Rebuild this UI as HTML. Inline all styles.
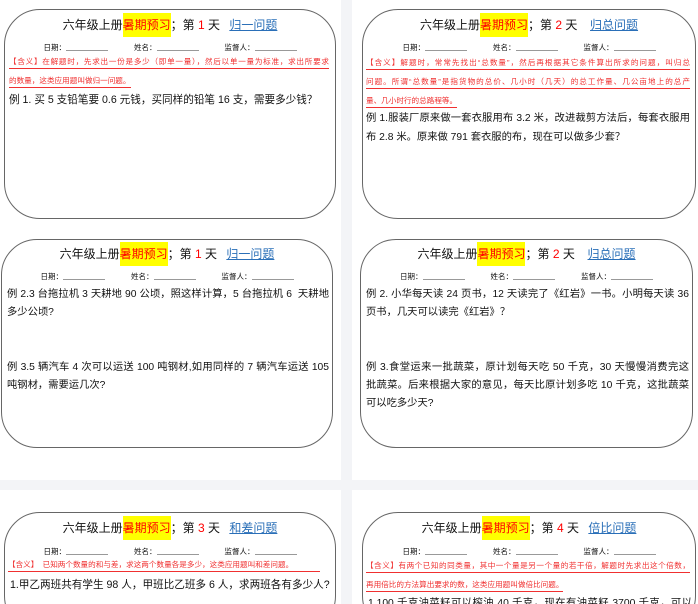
<!DOCTYPE html>
<html style="width:698px;height:604px;overflow:hidden"><head><meta charset="utf-8"><style>
*{margin:0;padding:0;box-sizing:border-box}
body{width:698px;height:604px;background:#f3f4f7;position:relative;overflow:hidden;font-family:"Liberation Sans","Noto Sans CJK SC",sans-serif;color:#111}
.pg{position:absolute;background:#fff}
.card{position:absolute;border:1px solid #666;border-radius:36px;background:#fff}
.t{position:absolute;left:0;right:0;text-align:center;font-size:12px;white-space:nowrap}
.hl{background:#ff0;color:#f00;display:inline-block;padding:5px 0;line-height:14px}
.r{color:#f00}
.lk{color:#2a6fb8;text-decoration:underline;margin-left:6px}
.d{position:absolute;left:0;right:0;text-align:center;font-size:7.5px;white-space:nowrap}
.d span{display:inline-block;margin:0 13px}
.u{display:inline-block;width:42px;border-bottom:1px solid #999;vertical-align:-1px}
.m{position:absolute;font-size:7.6px;color:#f03030;white-space:nowrap;border-bottom:1px solid #f03030;line-height:12px}
.j{text-align:justify;text-align-last:justify}
.e{position:absolute;font-size:10.3px;white-space:nowrap;line-height:14px}
</style></head><body>
<div class="pg" style="left:0;top:0;width:341px;height:480px"></div>
<div class="pg" style="left:352px;top:0;width:346px;height:480px"></div>
<div class="pg" style="left:0;top:490px;width:341px;height:114px"></div>
<div class="pg" style="left:352px;top:490px;width:346px;height:114px"></div>

<div class="card" style="left:4px;top:9px;width:332px;height:210px">
 <div class="t" style="top:3px">六年级上册<span class="hl">暑期预习</span>；第 <span class="r">1</span> 天 <span class="lk">归一问题</span></div>
 <div class="d" style="top:32px"><span>日期：<i class="u"></i></span><span>姓名：<i class="u"></i></span><span>监督人：<i class="u"></i></span></div>
 <div class="m j" style="left:4px;width:320px;top:46px">【含义】在解题时，先求出一份是多少（即单一量），然后以单一量为标准，求出所要求</div>
 <div class="m" style="left:4px;top:65px">的数量，这类应用题叫做归一问题。</div>
 <div class="e" style="left:4px;top:83px;font-size:10.6px">例 1. 买 5 支铅笔要 0.6 元钱，买同样的铅笔 16 支，需要多少钱？</div>
</div>

<div class="card" style="left:362px;top:9px;width:334px;height:210px">
 <div class="t" style="top:3px">六年级上册<span class="hl">暑期预习</span>；第 <span class="r">2</span> 天 &nbsp;<span class="lk">归总问题</span></div>
 <div class="d" style="top:32px"><span>日期：<i class="u"></i></span><span>姓名：<i class="u"></i></span><span>监督人：<i class="u"></i></span></div>
 <div class="m j" style="left:3px;width:324px;top:47px">【含义】解题时，常常先找出“总数量”，然后再根据其它条件算出所求的问题，叫归总</div>
 <div class="m j" style="left:3px;width:324px;top:66px">问题。所谓“总数量”是指货物的总价、几小时（几天）的总工作量、几公亩地上的总产</div>
 <div class="m" style="left:3px;top:85px">量、几小时行的总路程等。</div>
 <div class="e j" style="left:3px;width:324px;top:102px">例 1.服装厂原来做一套衣服用布 3.2 米，改进裁剪方法后，每套衣服用</div>
 <div class="e" style="left:3px;top:121px">布 2.8 米。原来做 791 套衣服的布，现在可以做多少套？</div>
</div>

<div class="card" style="left:1px;top:239px;width:332px;height:209px">
 <div class="t" style="top:2px">六年级上册<span class="hl">暑期预习</span>；第 <span class="r">1</span> 天 <span class="lk">归一问题</span></div>
 <div class="d" style="top:31px"><span>日期：<i class="u"></i></span><span>姓名：<i class="u"></i></span><span>监督人：<i class="u"></i></span></div>
 <div class="e j" style="left:5px;width:322px;top:48px">例 2.3 台拖拉机 3 天耕地 90 公顷，照这样计算，5 台拖拉机 6 &nbsp;天耕地</div>
 <div class="e" style="left:5px;top:66px">多少公顷?</div>
 <div class="e j" style="left:5px;width:322px;top:121px">例 3.5 辆汽车 4 次可以运送 100 吨钢材,如用同样的 7 辆汽车运送 105</div>
 <div class="e" style="left:5px;top:139px">吨钢材，需要运几次?</div>
</div>

<div class="card" style="left:360px;top:239px;width:333px;height:209px">
 <div class="t" style="top:2px">六年级上册<span class="hl">暑期预习</span>；第 <span class="r">2</span> 天 &nbsp;<span class="lk">归总问题</span></div>
 <div class="d" style="top:31px"><span>日期：<i class="u"></i></span><span>姓名：<i class="u"></i></span><span>监督人：<i class="u"></i></span></div>
 <div class="e j" style="left:5px;width:323px;top:48px">例 2. 小华每天读 24 页书，12 天读完了《红岩》一书。小明每天读 36</div>
 <div class="e" style="left:5px;top:66px">页书，几天可以读完《红岩》？</div>
 <div class="e j" style="left:5px;width:323px;top:121px">例 3.食堂运来一批蔬菜，原计划每天吃 50 千克，30 天慢慢消费完这</div>
 <div class="e j" style="left:5px;width:323px;top:139px">批蔬菜。后来根据大家的意见，每天比原计划多吃 10 千克，这批蔬菜</div>
 <div class="e" style="left:5px;top:157px">可以吃多少天?</div>
</div>

<div class="card" style="left:4px;top:512px;width:332px;height:120px">
 <div class="t" style="top:3px">六年级上册<span class="hl">暑期预习</span>；第 <span class="r">3</span> 天 <span class="lk">和差问题</span></div>
 <div class="d" style="top:33px"><span>日期：<i class="u"></i></span><span>姓名：<i class="u"></i></span><span>监督人：<i class="u"></i></span></div>
 <div class="m" style="left:3px;top:46px;width:312px">【含义】 &nbsp;已知两个数量的和与差，求这两个数量各是多少，这类应用题叫和差问题。</div>
 <div class="e" style="left:5px;top:65px;font-size:10.6px">1.甲乙两班共有学生 98 人，甲班比乙班多 6 人，求两班各有多少人?</div>
</div>

<div class="card" style="left:362px;top:512px;width:334px;height:120px">
 <div class="t" style="top:3px">六年级上册<span class="hl">暑期预习</span>；第 <span class="r">4</span> 天 <span class="lk">倍比问题</span></div>
 <div class="d" style="top:33px"><span>日期：<i class="u"></i></span><span>姓名：<i class="u"></i></span><span>监督人：<i class="u"></i></span></div>
 <div class="m j" style="left:3px;width:324px;top:47px">【含义】有两个已知的同类量，其中一个量是另一个量的若干倍，解题时先求出这个倍数，</div>
 <div class="m" style="left:3px;top:66px">再用倍比的方法算出要求的数，这类应用题叫做倍比问题。</div>
 <div class="e j" style="left:5px;width:324px;top:84px">1.100 千克油菜籽可以榨油 40 千克，现在有油菜籽 3700 千克，可以</div>
</div>
</body></html>
